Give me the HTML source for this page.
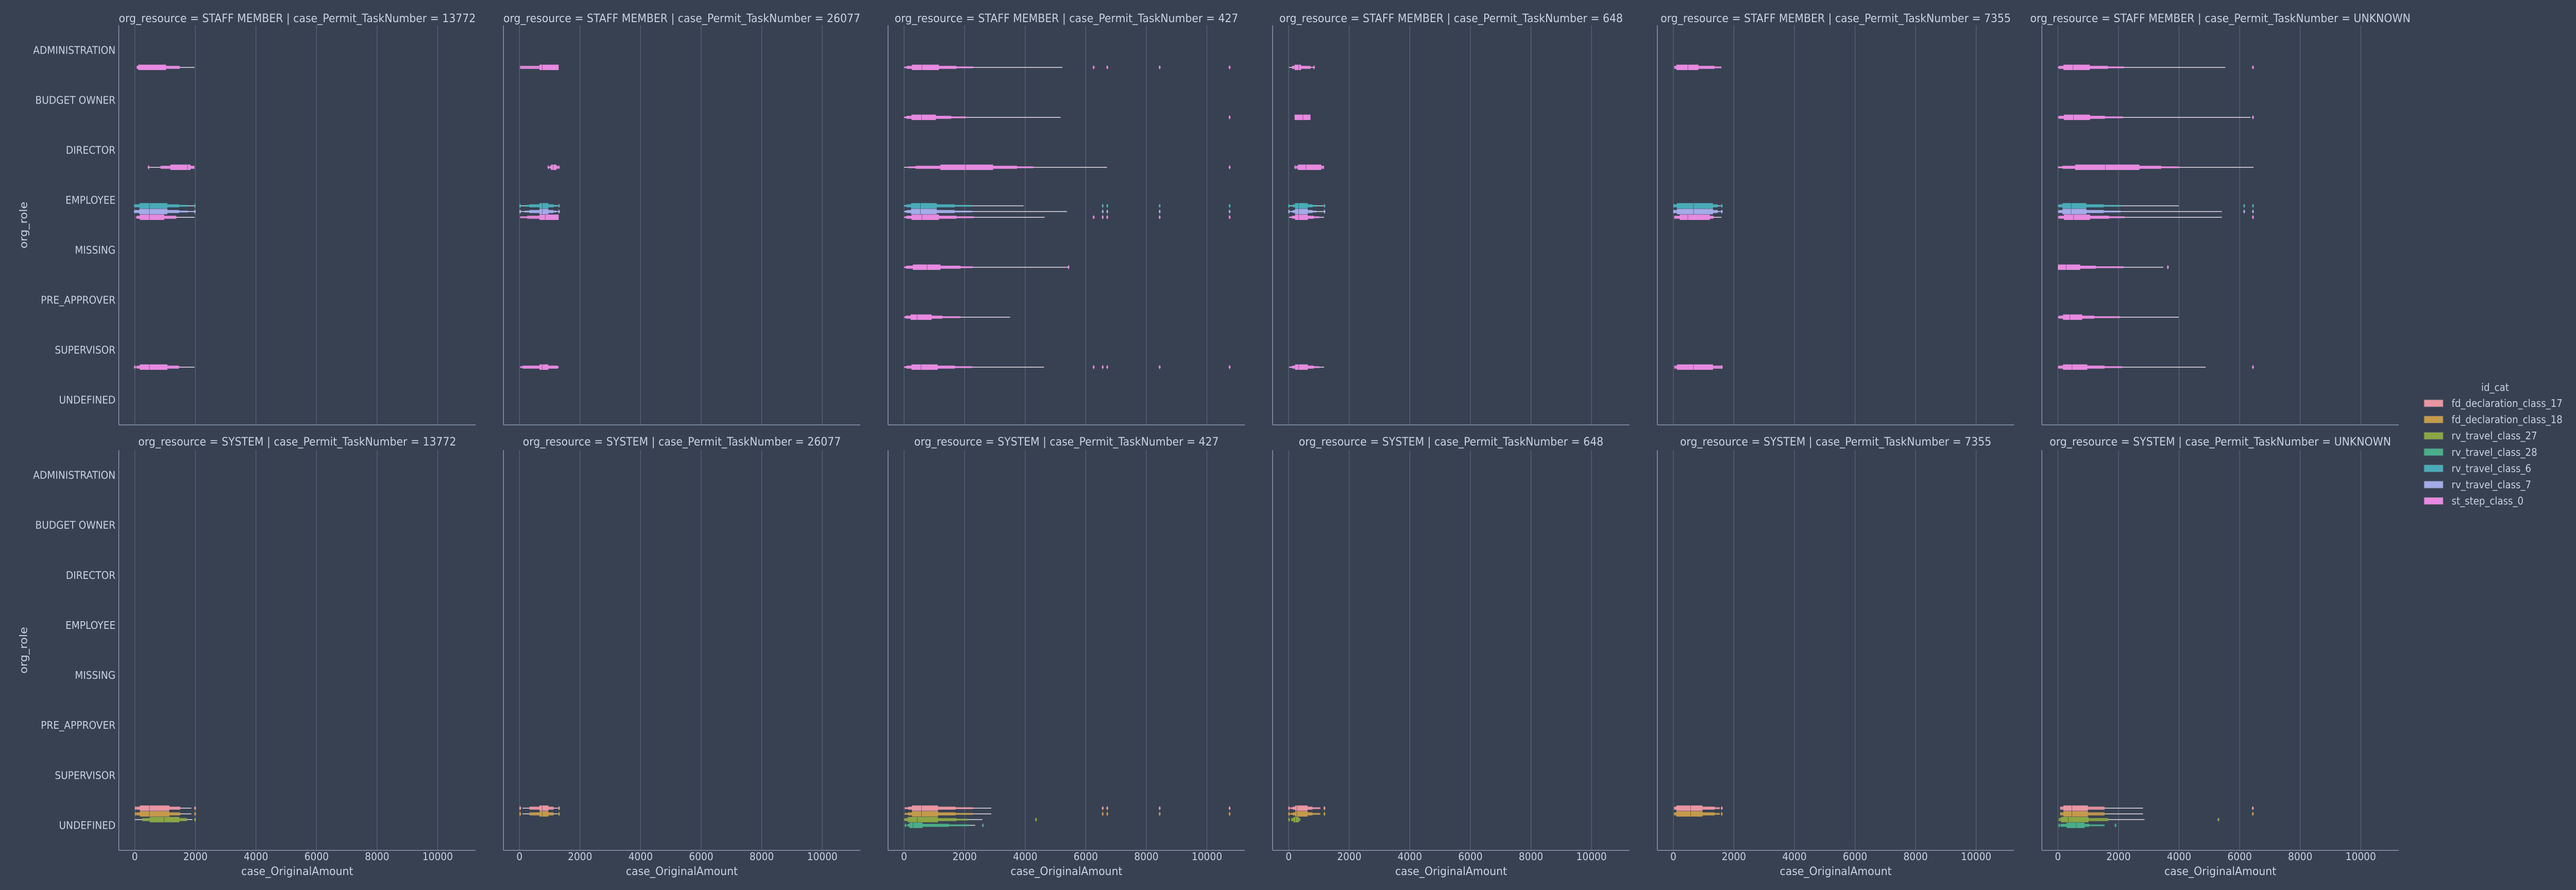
<!DOCTYPE html>
<html><head><meta charset="utf-8">
<style>
html,body{margin:0;padding:0;background:#374151;width:100vw;height:100vh;overflow:hidden}
svg{display:block;width:100vw;height:100vh}
svg text{font-family:"DejaVu Sans","Liberation Sans",sans-serif;fill:#c9d1e0}
</style></head>
<body>
<svg id="s" xmlns="http://www.w3.org/2000/svg" viewBox="0 0 5508 1728" preserveAspectRatio="none">
<rect width="5508" height="1728" fill="#374151"/>
<g id="g"></g>
<text x="5335" y="759" font-size="20" text-anchor="middle">id_cat</text>
</svg>
<script>
var NS="http://www.w3.org/2000/svg",G=document.getElementById('g');
function el(t,a,txt){var e=document.createElementNS(NS,t);for(var k in a)e.setAttribute(k,a[k]);if(txt!=null)e.textContent=txt;G.appendChild(e);return e;}
var COL=["#e995a3","#c49a4c","#8aa646","#4aae8a","#4aacb8","#a3ace8","#e78ae0"];
var LBL=["fd_declaration_class_17","fd_declaration_class_18","rv_travel_class_27","rv_travel_class_28","rv_travel_class_6","rv_travel_class_7","st_step_class_0"];
var CATS=["ADMINISTRATION","BUDGET OWNER","DIRECTOR","EMPLOYEE","MISSING","PRE_APPROVER","SUPERVISOR","UNDEFINED"];
var TN=["13772","26077","427","648","7355","UNKNOWN"];
var PW=763, ROWS=[[49,825],[874,1651]];
function PL(p){return 254+822.4*p;}
function X(p,v){return PL(p)+34.3+v*0.06475;}
function CY(r,c){var t=ROWS[r][0],b=ROWS[r][1];return t+(b-t)/8*(c+0.5);}
for(var r=0;r<2;r++)for(var p=0;p<6;p++){
  var L=PL(p),T=ROWS[r][0],B=ROWS[r][1];
  for(var v=0;v<=10000;v+=2000){var x=X(p,v);el('line',{x1:x,x2:x,y1:T,y2:B,stroke:'#5b677a','stroke-width':1.3});
    if(r==1)el('text',{x:x,y:1670,'font-size':20.5,'text-anchor':'middle'},String(v));}
  el('line',{x1:L,x2:L,y1:T,y2:B,stroke:'#8a99b0','stroke-width':1.6});
  el('line',{x1:L,x2:L+PW,y1:B,y2:B,stroke:'#8a99b0','stroke-width':1.6});
  var ttl="org_resource = "+(r==0?"STAFF MEMBER":"SYSTEM")+" | case_Permit_TaskNumber = "+TN[p];
  el('text',{x:L+PW/2,y:(r==0?43:865),'font-size':22.5,'text-anchor':'middle'},ttl);
  if(r==1)el('text',{x:L+PW/2,y:1699,'font-size':22.5,'text-anchor':'middle'},"case_OriginalAmount");
  if(p==0){for(var c=0;c<8;c++)el('text',{x:247,y:CY(r,c)+7,'font-size':20.5,'text-anchor':'end'},CATS[c]);
    var ym=(T+B)/2;el('text',{x:58,y:ym,'font-size':22.5,'text-anchor':'middle',transform:'rotate(-90 58 '+ym+')'},"org_role");}
}
var H=[10.5,6,3.5,2.5];
function Bx(p,r,c,h,lv,med,line,outs){
  var cy=CY(r,c)+(h-3)*11.1,col=COL[h];
  if(line){el('rect',{x:X(p,line[0]),y:cy-0.8,width:Math.max(1,X(p,line[1])-X(p,line[0])),height:1.6,fill:'#f2e4f0',opacity:0.9});}
  for(var i=lv.length-1;i>=0;i--){var a=X(p,lv[i][0]),b=X(p,lv[i][1]),hh=H[i];
    el('rect',{x:a,y:cy-hh/2,width:Math.max(1,b-a),height:hh,fill:col,opacity:(i==0?1:0.92)});}
  if(med!=null){var m=X(p,med);el('line',{x1:m,x2:m,y1:cy-5.2,y2:cy+5.2,stroke:'#3a3344','stroke-width':1,opacity:0.6});}
  (outs||[]).forEach(function(o){var x=X(p,o);el('path',{d:'M'+x+' '+(cy-4.5)+'L'+(x+2.3)+' '+cy+'L'+x+' '+(cy+4.5)+'L'+(x-2.3)+' '+cy+'Z',fill:col});});
}
var E4=[[230,1080],[80,1670],[20,2240]];
var D=[
[0,0,0,6,[[110,1030],[60,1480]],null,[60,1970],[]],
[0,0,2,6,[[1175,1840],[850,1970]],1740,[455,1970],[455]],
[0,0,3,4,[[150,1075],[20,1460],[10,1760]],480,[0,1970],[0,1980]],
[0,0,3,5,[[150,1075],[20,1460],[10,1760]],480,[0,1970],[0,1980]],
[0,0,3,6,[[165,970],[60,1370]],480,[30,1970],[]],
[0,0,6,6,[[165,1075],[60,1460]],480,[0,1970],[0]],
[1,0,0,6,[[660,1295],[20,660]],755,null,[]],
[1,0,2,6,[[1045,1220],[1000,1270]],1115,[955,1300],[955,1300]],
[1,0,3,4,[[660,955],[330,1125],[175,1220]],755,[25,1305],[25,1305]],
[1,0,3,5,[[660,955],[330,1125],[175,1220]],755,[25,1305],[25,1305]],
[1,0,3,6,[[660,1295],[255,660],[20,255]],850,null,[]],
[1,0,6,6,[[660,955],[100,1265],[20,1295]],755,null,[]],
[2,0,0,6,[[260,1150],[95,1730],[25,2280]],590,[0,5230],[6260,6710,8440,10750]],
[2,0,1,6,[[245,1050],[80,1557],[20,2040]],577,[0,5170],[10750]],
[2,0,2,6,[[1200,2940],[380,3730],[135,4270]],2030,[0,6700],[10750]],
[2,0,3,4,E4,540,[0,3945],[6560,6710,8440,10750]],
[2,0,3,5,E4,540,[0,5380],[6560,6710,8440,10750]],
[2,0,3,6,[[245,1150],[80,1730],[20,2300]],590,[0,4640],[6260,6560,6710,8440,10750]],
[2,0,4,6,[[290,1200],[70,1865],[15,2270]],760,[0,5430],[5430]],
[2,0,5,6,[[215,910],[50,1265],[20,1865]],430,[0,3500],[]],
[2,0,6,6,[[245,1110],[80,1680],[20,2250]],560,[0,4620],[6260,6560,6710,8440,10750]],
[3,0,0,6,[[195,410],[105,720]],330,[10,835],[835]],
[3,0,1,6,[[195,720]],470,null,[]],
[3,0,2,6,[[305,1075],[250,1170]],570,null,[215]],
[3,0,3,4,[[210,630],[150,785],[90,920]],330,[10,1180],[10,1180]],
[3,0,3,5,[[210,630],[150,785],[90,920]],330,[10,1180],[10,1180]],
[3,0,3,6,[[210,630],[120,830],[55,1015]],330,[10,1170],[]],
[3,0,6,6,[[210,630],[120,830],[55,1015]],330,[10,1170],[]],
[4,0,0,6,[[105,830],[30,1360],[30,1590]],480,null,[]],
[4,0,1,6,[],480,null,[]],
[4,0,2,6,[],1333,null,[]],
[4,0,3,4,[[120,1310],[40,1470]],665,[25,1600],[25,1600]],
[4,0,3,5,[[120,1310],[40,1470]],665,[25,1600],[25,1600]],
[4,0,3,6,[[210,1205],[30,1325]],480,[30,1590],[]],
[4,0,6,6,[[120,1310],[30,1600]],665,null,[1600]],
[5,0,0,6,[[180,1050],[30,1650],[10,2180]],500,[0,5525],[6440]],
[5,0,1,6,[[195,1060],[30,1550],[10,2150]],515,[0,6360],[6440]],
[5,0,2,6,[[570,2690],[150,3410],[0,3985]],1565,[0,6460],[]],
[5,0,3,4,[[150,940],[20,1510],[0,2070]],435,[0,3990],[6150,6440]],
[5,0,3,5,[[150,940],[20,1510],[0,2070]],435,[0,5415],[6150,6440]],
[5,0,3,6,[[195,1060],[30,1685],[0,2200]],515,[0,5415],[6440]],
[5,0,4,6,[[0,735],[0,1250],[0,2165]],270,[0,3480],[3630]],
[5,0,5,6,[[165,800],[30,1200],[0,2055]],395,[0,3990],[]],
[5,0,6,6,[[165,970],[20,1540],[0,2120]],465,[0,4880],[6440]],
[0,1,7,0,[[165,1140],[60,1500]],480,[30,1870],[30,1990]],
[0,1,7,1,[[165,1140],[60,1500]],480,[30,1870],[30,1990]],
[0,1,7,2,[[490,1470],[240,1720]],970,[0,1900],[1990]],
[1,1,7,0,[[660,955],[330,1125]],755,[100,1265],[25,1305]],
[1,1,7,1,[[660,955],[330,1125]],755,[100,1265],[25,1305]],
[2,1,7,0,[[260,1120],[135,1700],[20,2270]],577,[20,2880],[6560,6710,8440,10750]],
[2,1,7,1,[[260,1120],[135,1700],[20,2270]],577,[20,2880],[6560,6710,8440,10750]],
[2,1,7,2,[[120,1120],[30,1730],[10,2110]],435,[0,2585],[4355]],
[2,1,7,3,[[180,615],[130,1480],[100,2135]],290,[100,2350],[50,2600]],
[3,1,7,0,[[215,625],[135,785],[50,1045]],270,null,[10,1180]],
[3,1,7,1,[[215,625],[135,785],[50,1045]],270,null,[10,1180]],
[3,1,7,2,[[160,330],[80,385]],225,null,[10]],
[4,1,7,0,[[100,965],[25,1365],[25,1535]],570,null,[1600]],
[4,1,7,1,[[100,965],[25,1365],[25,1535]],570,null,[1600]],
[5,1,7,0,[[180,990],[70,1540]],460,[1540,2810],[6435]],
[5,1,7,1,[[180,990],[70,1540]],460,[1540,2810],[6435]],
[5,1,7,2,[[100,1010],[25,1665]],340,[1665,2860],[5300]],
[5,1,7,3,[[285,880],[90,1030],[90,1540]],605,null,[45,1900]]
];
D.forEach(function(d){Bx.apply(null,d);});
for(var i=0;i<7;i++){var y=783+31.6*i;
  el('rect',{x:5183,y:y-7,width:41,height:14,fill:COL[i],stroke:'#505a6a','stroke-width':1});
  el('text',{x:5242,y:y+7,'font-size':20},LBL[i]);}
</script>
</body></html>
